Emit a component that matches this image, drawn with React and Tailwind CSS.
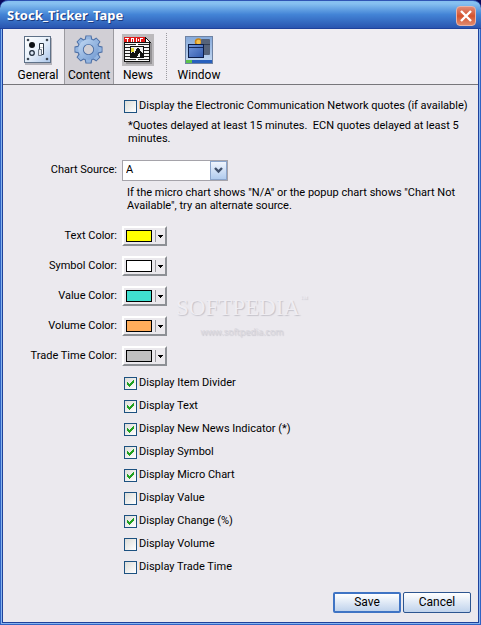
import React from 'react';

const colors = [
  { id: 'text', label: 'Text Color:', swatch: 'bg-[#ffff00]' },
  { id: 'symbol', label: 'Symbol Color:', swatch: 'bg-white' },
  { id: 'value', label: 'Value Color:', swatch: 'bg-[#40e0d0]' },
  { id: 'volume', label: 'Volume Color:', swatch: 'bg-[#ffad5b]' },
  { id: 'trade', label: 'Trade Time Color:', swatch: 'bg-[#c0c0c0]' },
];

const options = [
  { id: 'divider', label: 'Display Item Divider', checked: true },
  { id: 'show-text', label: 'Display Text', checked: true },
  { id: 'news', label: 'Display New News Indicator (*)', checked: true },
  { id: 'show-symbol', label: 'Display Symbol', checked: true },
  { id: 'micro', label: 'Display Micro Chart', checked: true },
  { id: 'show-value', label: 'Display Value', checked: false },
  { id: 'change', label: 'Display Change (%)', checked: true },
  { id: 'show-volume', label: 'Display Volume', checked: false },
  { id: 'trade-time', label: 'Display Trade Time', checked: false },
];

function GeneralIcon() {
  return (
    <svg width="32" height="32" viewBox="0 0 32 32" aria-hidden="true">
      <defs>
        <linearGradient id="plate" x1="0" y1="0" x2="1" y2="1">
          <stop offset="0" stopColor="#ffffff" />
          <stop offset="0.5" stopColor="#e6effa" />
          <stop offset="1" stopColor="#abc6ea" />
        </linearGradient>
      </defs>
      <rect x="3" y="4" width="27" height="27" fill="#b5b4bc" />
      <rect x="2.5" y="2.5" width="26" height="26" fill="url(#plate)" stroke="#5f7188" />
      <g fill="#3c4654">
        <circle cx="6" cy="6" r="1.3" />
        <circle cx="25" cy="6" r="1.3" />
        <circle cx="6" cy="25" r="1.3" />
        <circle cx="25" cy="25" r="1.3" />
      </g>
      <circle cx="10" cy="11" r="3" fill="#0c0f14" />
      <circle cx="10" cy="19" r="2.3" fill="#dbe6f4" stroke="#1d2a3a" strokeWidth="1.2" />
      <path d="M17.5 9.5h4v11h-4z" fill="#fff" stroke="#2c3846" />
      <path d="M16.5 15.5h3v6h-3z" fill="#e3e7ed" stroke="#6c7785" />
      <path d="M18 13.5h3" stroke="#c7ccd4" />
    </svg>
  );
}

function GearIcon() {
  return (
    <svg width="32" height="32" viewBox="0 0 32 32" aria-hidden="true">
      <defs>
        <linearGradient id="gear" x1="0" y1="0" x2="1" y2="1">
          <stop offset="0" stopColor="#b9d2f0" />
          <stop offset="1" stopColor="#789fd4" />
        </linearGradient>
      </defs>
      <g transform="translate(15.5 15.5)">
        <g fill="#4c6fa5">
          <path id="tooth" d="M-4-9.5l1-4.500h6l1 4.500z" />
          <use href="#tooth" transform="rotate(45)" />
          <use href="#tooth" transform="rotate(90)" />
          <use href="#tooth" transform="rotate(135)" />
          <use href="#tooth" transform="rotate(180)" />
          <use href="#tooth" transform="rotate(225)" />
          <use href="#tooth" transform="rotate(270)" />
          <use href="#tooth" transform="rotate(315)" />
        </g>
        <circle r="7.900" fill="none" stroke="#4c6fa5" strokeWidth="6.400" />
        <g fill="#94b5e0">
          <path id="face" d="M-3-9l.9-4.200h4.200L3-9z" />
          <use href="#face" transform="rotate(45)" />
          <use href="#face" transform="rotate(90)" />
          <use href="#face" transform="rotate(135)" />
          <use href="#face" transform="rotate(180)" />
          <use href="#face" transform="rotate(225)" />
          <use href="#face" transform="rotate(270)" />
          <use href="#face" transform="rotate(315)" />
        </g>
        <circle r="7.900" fill="none" stroke="url(#gear)" strokeWidth="4.600" />
      </g>
    </svg>
  );
}

function NewsIcon() {
  return (
    <svg width="32" height="32" viewBox="0 0 32 32" shapeRendering="crispEdges" aria-hidden="true">
      <rect width="32" height="32" fill="#bcbabd" />
      <path d="M4 9h26v21H4z" fill="#939194" />
      <path d="M2 3h21l5 5v20H2z" fill="#111" />
      <path d="M3 9h24v18H3z" fill="#f5f5f5" />
      <path d="M2 3h21l2 5H2z" fill="#e01818" />
      <path d="M3 4h4v1H6v3H5V5H3zM9 4h3v1H9zM9 5h1v3H9zM11 5h1v3h-1zM14 4h1v4h-1zM16 5h1v2h-1zM18 4h3v1h-2v3h-1z" fill="#fff" />
      <path d="M23 3v5h5z" fill="#fff" stroke="#111" />
      <path
        d="M3 10.5h11M16 10.5h11M3 13.5h5M22 13.5h5M3 16.5h5M22 16.5h5M3 19.5h5M22 19.5h5M3 22.5h5M22 22.5h5M3 25.5h11M16 25.5h11"
        stroke="#222"
        strokeWidth="1"
      />
      <path d="M8 12h14v12H8z" fill="#111" />
      <path d="M9 13h12v10H9z" fill="#eee" />
      <path d="M9 14h3v4H9z" fill="#e9dc3c" />
      <path d="M9 23v-4l2-1 2 2 1-5 2-1 2 1 1 3 2 2v3h-3v-4h-1l-2 4z" fill="#111" />
      <path d="M14 24h2v3h-2zM14 9h2v3h-2z" fill="#fff" />
    </svg>
  );
}

function WindowIcon() {
  return (
    <svg width="32" height="32" viewBox="0 0 32 32" aria-hidden="true">
      <defs>
        <linearGradient id="desk" x1="0" y1="0" x2="0" y2="1">
          <stop offset="0" stopColor="#86a9da" />
          <stop offset="1" stopColor="#c6daf3" />
        </linearGradient>
        <linearGradient id="pane" x1="0" y1="0" x2="1" y2="1">
          <stop offset="0" stopColor="#7599dc" />
          <stop offset="1" stopColor="#3159ad" />
        </linearGradient>
      </defs>
      <rect x="2.5" y="2.5" width="27" height="27" fill="url(#desk)" stroke="#6f83a3" />
      <circle cx="15.5" cy="8" r="3" fill="#f4c04c" stroke="#c98516" strokeWidth="1.5" />
      <rect x="18" y="5" width="9" height="16" rx="1" fill="#56637a" />
      <path d="M18 10.5h9" stroke="#333f54" />
      <rect x="5.5" y="10.5" width="15" height="13" fill="url(#pane)" stroke="#0c1d48" />
      <path d="M6 13.5h14" stroke="#15295c" />
      <path d="M3 26h26v3H3z" fill="#2860bd" />
      <path d="M3 26h6v3H3z" fill="#5cc24c" />
    </svg>
  );
}

function ToolButton({ icon, label, active }) {
  return (
    <button
      type="button"
      aria-pressed={!!active}
      className={
        active
          ? 'flex h-full w-[50px] flex-col items-center border-x border-[#9b9aa0] bg-[#d1cfd5] pt-[5px]'
          : 'flex h-full w-12 flex-col items-center pt-[5px]'
      }
    >
      {icon}
      <span className="text-xs leading-[18px]">{label}</span>
    </button>
  );
}

function Check({ id, label, checked }) {
  return (
    <div className="flex h-[23px] items-center gap-[2px]">
      <span className="relative flex">
        <input
          id={id}
          type="checkbox"
          defaultChecked={checked}
          className="peer size-[13px] appearance-none border border-[#1c5180] bg-linear-to-br from-[#dcdcd7] to-white"
        />
        <svg
          viewBox="0 0 13 13"
          className="pointer-events-none absolute inset-0 hidden size-[13px] peer-checked:block"
          shapeRendering="crispEdges"
          aria-hidden="true"
        >
          <path d="M3 5h1v1h1v1h1V6h1V5h1V4h1V3h1v3H9v1H8v1H7v1H6v1H5V9H4V8H3z" fill="#21a121" />
        </svg>
      </span>
      <label htmlFor={id}>{label}</label>
    </div>
  );
}

function ColorRow({ id, label, swatch }) {
  return (
    <div className="flex h-[30px] items-center gap-[5px]">
      <label htmlFor={id} className="w-[114px] text-right">
        {label}
      </label>
      <button
        id={id}
        type="button"
        className="flex h-5 w-[45px] items-center border-2 border-t-white border-r-[#8d9095] border-b-[#8d9095] border-l-white bg-[#ebe9ed] pl-[2px]"
      >
        <span className={`h-3 w-[26px] border border-black ${swatch}`} />
        <span className="ml-[3px] h-3 w-px bg-[#9b9aa0]" />
        <svg width="5" height="3" viewBox="0 0 5 3" className="ml-[2px]" shapeRendering="crispEdges" aria-hidden="true">
          <path d="M0 0h5v1H4v1H3v1H2V2H1V1H0z" fill="#000" />
        </svg>
      </button>
    </div>
  );
}

export default function App() {
  return (
    <div className="flex min-h-screen flex-col bg-[#0a0a5c] font-[Roboto,'DejaVu_Sans_Condensed',sans-serif] text-[11px] text-black">
      <header className="flex h-[29px] items-center justify-between rounded-t-lg border-t border-b border-t-[#2f55b4] border-b-[#1f429b] bg-linear-to-b from-[#86c0f0] from-10% via-[#4384d6] via-50% to-[#2a55b0] pt-[2px] pr-[5px] pl-[7px]">
        <h1 className="font-['Noto_Sans',sans-serif] text-[13px] font-bold text-white text-shadow-[1px_1px_0_#1c3a7c]">
          Stock_Ticker_Tape
        </h1>
        <button
          type="button"
          aria-label="Close"
          className="flex size-5 items-center justify-center rounded-sm border border-[#e9b3a8] bg-linear-to-b from-[#e08a76] via-[#d4522c] to-[#e0896c]"
        >
          <svg width="12" height="12" viewBox="0 0 12 12" aria-hidden="true">
            <path d="M1 1l10 10M11 1L1 11" stroke="#fff" strokeWidth="2.4" />
          </svg>
        </button>
      </header>

      <div className="flex flex-1 flex-col border-x border-b border-[#2f63c4]">
        <div className="flex flex-1 flex-col border-x border-b border-[#86b4ee]">
          <main className="flex flex-1 flex-col border-x border-b border-[#1f429b] bg-[#ebe9ee]">
            <nav className="flex h-14 border-b border-[#77767b] bg-[#efedf2] pl-[11px]">
              <div className="w-[50px]">
                <ToolButton icon={<GeneralIcon />} label="General" />
              </div>
              <ToolButton icon={<GearIcon />} label="Content" active />
              <ToolButton icon={<NewsIcon />} label="News" />
              <span className="mx-1 my-1 border-l border-dotted border-[#9b9aa0]" />
              <div className="pl-1">
                <ToolButton icon={<WindowIcon />} label="Window" />
              </div>
            </nav>

            <form className="relative flex flex-1 flex-col" onSubmit={(e) => e.preventDefault()}>
              <div className="pt-[10px] pl-[121px]">
                <Check id="ecn" label="Display the Electronic Communication Network quotes (if available)" />
                <p className="max-w-[340px] pt-px pl-1 leading-[13px]">
                  *Quotes delayed at least 15 minutes.&nbsp; ECN quotes delayed at least 5 minutes.
                </p>
              </div>

              <div className="mt-[15px] flex items-center gap-[5px]">
                <label htmlFor="source" className="w-[114px] text-right">
                  Chart Source:
                </label>
                <span className="relative flex">
                  <select
                    id="source"
                    className="h-[21px] w-[106px] appearance-none border border-[#a5a3aa] bg-white pl-[3px]"
                  >
                    <option>A</option>
                  </select>
                  <span className="pointer-events-none absolute top-px right-px flex h-[19px] w-[17px] items-center justify-center border border-[#8ba5cc] bg-linear-to-b from-[#f0f5fd] to-[#b0cbee]">
                    <svg width="9" height="7" viewBox="0 0 9 7" aria-hidden="true">
                      <path d="M1 1l3.5 3.5L8 1" fill="none" stroke="#40506c" strokeWidth="2.4" />
                    </svg>
                  </span>
                </span>
              </div>
              <p className="mt-[5px] ml-[124px] max-w-[330px] leading-[13px]">
                If the micro chart shows "N/A" or the popup chart shows "Chart Not Available", try an alternate source.
              </p>

              <div className="mt-[9px]">
                {colors.map((c) => (
                  <ColorRow key={c.id} {...c} />
                ))}
              </div>

              <div className="pt-px pl-[121px]">
                {options.map((o) => (
                  <Check key={o.id} {...o} />
                ))}
              </div>

              {/* embossed watermark */}
              <div className="pointer-events-none absolute top-[208px] left-[173px] flex flex-col items-center text-[#efedf2] text-shadow-[1px_1px_1px_#c4c2ca]">
                <span className="flex items-start font-['Liberation_Serif',serif] text-[23px] leading-[30px]">
                  SOFTPEDIA<small className="text-[8px] leading-[12px]">™</small>
                </span>
                <span className="font-['Open_Sans',sans-serif] text-[9px] leading-[18px] text-[#d9d7dd]">
                  www.softpedia.com
                </span>
              </div>

              <div className="mt-auto flex justify-end gap-[2px] pr-[7px] pb-[9px]">
                <button
                  type="submit"
                  className="h-[21px] w-[68px] rounded-xs border-2 border-[#3f74c4] bg-linear-to-b from-white to-[#c0d3ec] text-xs leading-[17px]"
                >
                  Save
                </button>
                <button
                  type="button"
                  className="h-[21px] w-[68px] rounded-xs border border-[#2c5590] bg-linear-to-b from-white to-[#c0d3ec] text-xs leading-[17px]"
                >
                  Cancel
                </button>
              </div>
            </form>
          </main>
        </div>
      </div>
    </div>
  );
}
